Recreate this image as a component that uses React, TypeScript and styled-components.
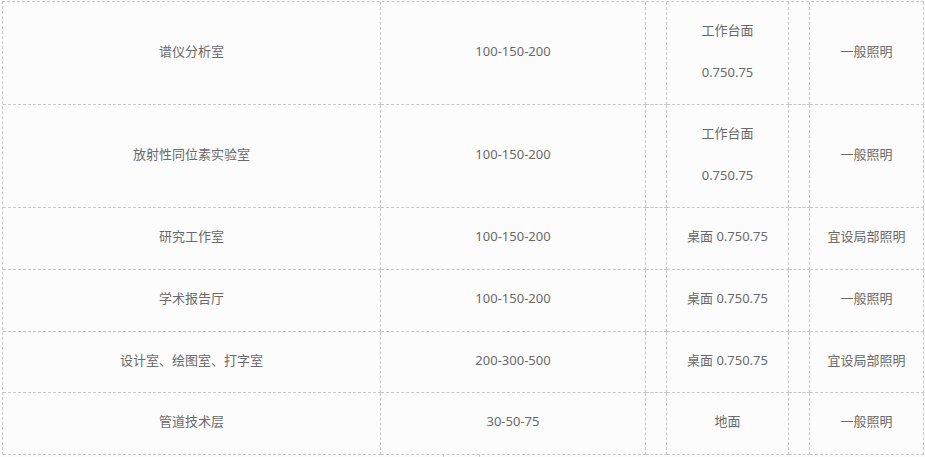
import styled, { createGlobalStyle } from 'styled-components';

const GlobalStyle = createGlobalStyle`
  html, body {
    margin: 0;
    padding: 0;
    background: #fcfcfc;
  }
  body {
    font-family: "Noto Sans", "Noto Sans CJK SC", sans-serif;
  }
`

const Page = styled.div`
  padding: 1px 0 0 2px;
  width: 925px;
  height: 457px;
  box-sizing: border-box;
  overflow: hidden;
`

const Table = styled.div`
  display: grid;
  grid-template-columns: 378px 265px 21px 122px 21px 114px;
  grid-template-rows: 103px 103px 62px 62px 61px 62px;
  border-top: 1px dashed #c8c8c8;
  border-left: 1px dashed #c8c8c8;
  width: max-content;
`

const Cell = styled.div`
  border-right: 1px dashed #c8c8c8;
  border-bottom: 1px dashed #c8c8c8;
  display: flex;
  flex-direction: column;
  align-items: center;
  justify-content: center;
  gap: 21px;
  padding-bottom: 4px;
  font-size: 13px;
  line-height: 21px;
  color: #6a6a6a;
  white-space: nowrap;
`

const Stub = styled.div`
  margin-left: 441px;
  width: 35px;
  height: 3px;
  border-left: 1px dashed #c8c8c8;
  border-right: 1px dashed #c8c8c8;
`

type Row = {
  name: string;
  lux: string;
  plane: string[];
  kind: string;
}

const rows: Row[] = [
  { name: '谱仪分析室', lux: '100-150-200', plane: ['工作台面', '0.750.75'], kind: '一般照明' },
  { name: '放射性同位素实验室', lux: '100-150-200', plane: ['工作台面', '0.750.75'], kind: '一般照明' },
  { name: '研究工作室', lux: '100-150-200', plane: ['桌面 0.750.75'], kind: '宜设局部照明' },
  { name: '学术报告厅', lux: '100-150-200', plane: ['桌面 0.750.75'], kind: '一般照明' },
  { name: '设计室、绘图室、打字室', lux: '200-300-500', plane: ['桌面 0.750.75'], kind: '宜设局部照明' },
  { name: '管道技术层', lux: '30-50-75', plane: ['地面'], kind: '一般照明' },
];

export default function App() {
  return (
    <Page>
      <GlobalStyle />
      <Table>
        {rows.map((row, idx) => [
          <Cell key={idx + '-name'}>{row.name}</Cell>,
          <Cell key={idx + '-lux'}>{row.lux}</Cell>,
          <Cell key={idx + '-gap1'} />,
          <Cell key={idx + '-plane'}>
            {row.plane.map((line, i) => <span key={i}>{line}</span>)}
          </Cell>,
          <Cell key={idx + '-gap2'} />,
          <Cell key={idx + '-kind'}>{row.kind}</Cell>,
        ])}
      </Table>
      <Stub />
    </Page>
  );
}
